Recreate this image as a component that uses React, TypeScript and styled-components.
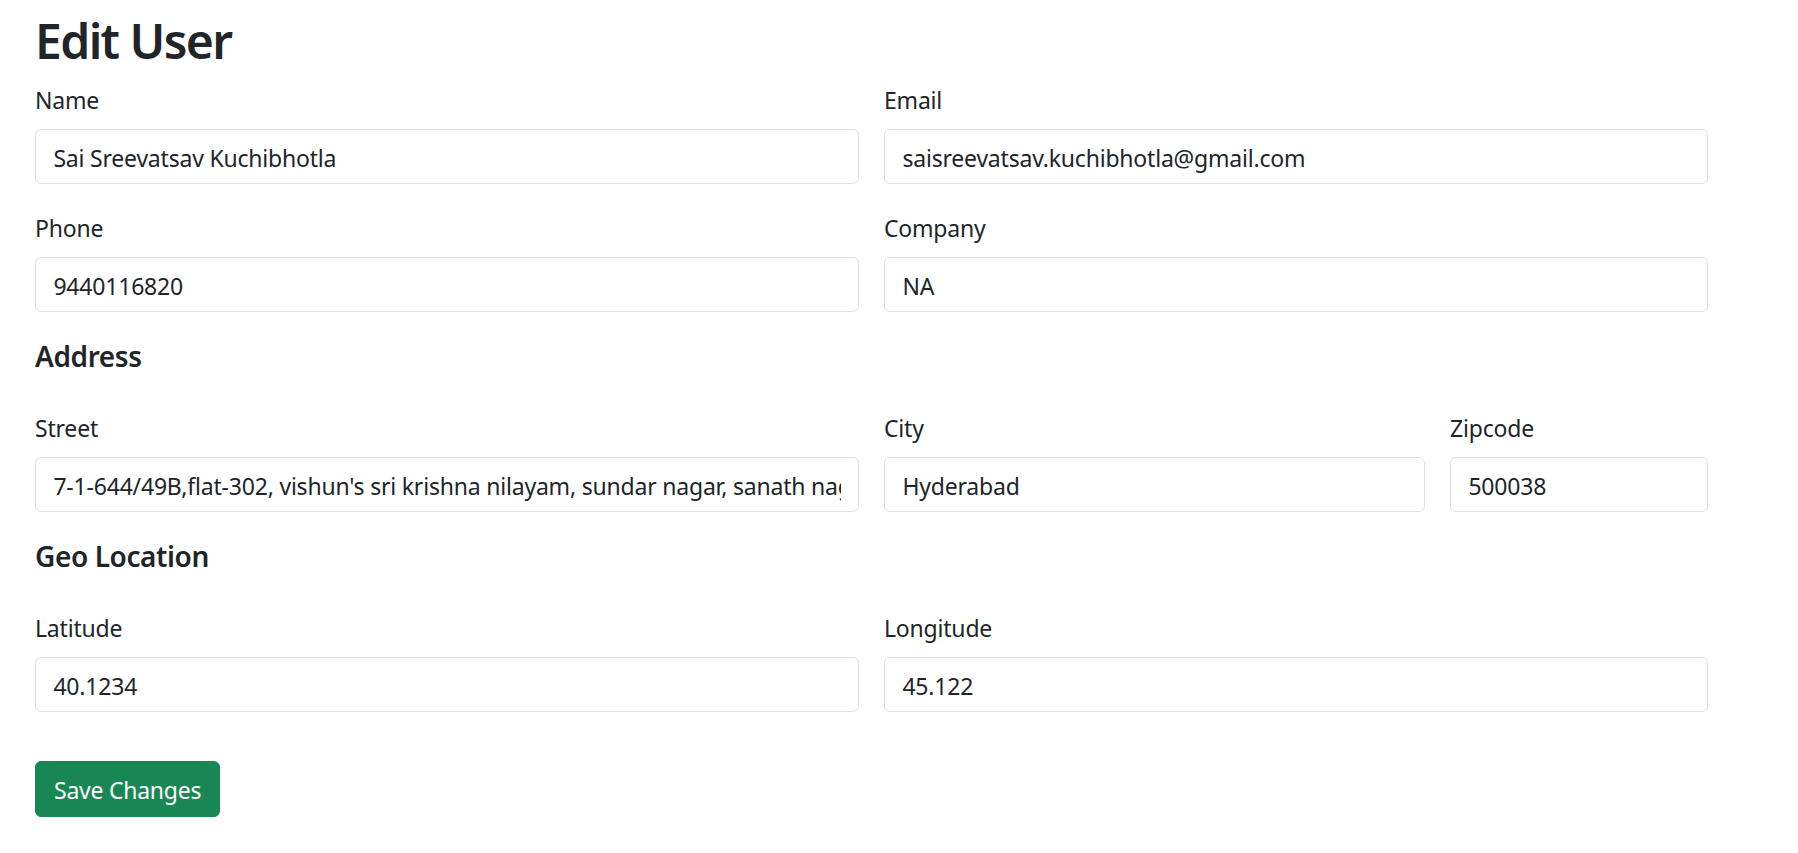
import React from "react";
import styled, { createGlobalStyle } from "styled-components";

const GlobalStyle = createGlobalStyle`
  html, body {
    margin: 0;
    padding: 0;
    background: #ffffff;
  }
  body {
    font-family: "Segoe UI", "Noto Sans", "Open Sans", Arial, sans-serif;
    color: #212529;
  }
  * { box-sizing: border-box; }
`;

const Page = styled.main`
  padding: 10px 0 20px 35px;
  width: 1708px;
`;

const Title = styled.h1`
  margin: 0 0 11.6px 0;
  font-size: 48px;
  line-height: 61px;
  font-weight: 600;
  letter-spacing: -1.6px;
`;

const SectionTitle = styled.h5`
  margin: 0 0 37px 0;
  font-size: 28px;
  line-height: 35px;
  font-weight: 600;
  letter-spacing: -0.4px;
`;

const Row = styled.div<{ $cols: string }>`
  display: grid;
  grid-template-columns: ${(p) => p.$cols};
  column-gap: 25px;
`;

const Field = styled.div`
  display: flex;
  flex-direction: column;
  margin-bottom: 27px;
  min-width: 0;
`;

const Label = styled.label`
  font-size: 23px;
  line-height: 34.5px;
  margin-bottom: 11.7px;
  letter-spacing: -0.2px;
`;

const Input = styled.input`
  display: block;
  width: 100%;
  height: 55px;
  padding: 3px 17.4px 0 17.4px;
  font-family: inherit;
  font-size: 23px;
  line-height: 34.5px;
  letter-spacing: -0.2px;
  color: #212529;
  background: #ffffff;
  border: 1px solid #dee2e6;
  border-radius: 6px;
  outline: none;
`;

const Actions = styled.div`
  padding-top: 21.5px;
`;

const SaveButton = styled.button`
  height: 56px;
  padding: 2px 18px 0 18px;
  font-family: inherit;
  font-size: 23px;
  line-height: 34.5px;
  letter-spacing: -0.25px;
  color: #ffffff;
  background: #198754;
  border: 1px solid #198754;
  border-radius: 6px;
  cursor: pointer;
`;

type FieldDef = { label: string; value: string };

const FormField: React.FC<FieldDef> = ({ label, value }) => {
  const id = label.toLowerCase().replace(/\s+/g, "-");
  return (
    <Field>
      <Label htmlFor={id}>{label}</Label>
      <Input id={id} type="text" defaultValue={value} />
    </Field>
  );
};

export default function App() {
  return (
    <>
      <GlobalStyle />
      <Page>
        <Title>Edit User</Title>
        <form onSubmit={(e) => e.preventDefault()}>
          <Row $cols="1fr 1fr">
            <FormField label="Name" value="Sai Sreevatsav Kuchibhotla" />
            <FormField label="Email" value="saisreevatsav.kuchibhotla@gmail.com" />
          </Row>
          <Row $cols="1fr 1fr">
            <FormField label="Phone" value="9440116820" />
            <FormField label="Company" value="NA" />
          </Row>
          <SectionTitle>Address</SectionTitle>
          <Row $cols="824px 541px 1fr">
            <FormField
              label="Street"
              value="7-1-644/49B,flat-302, vishun's sri krishna nilayam, sundar nagar, sanath nagar, hyderabad"
            />
            <FormField label="City" value="Hyderabad" />
            <FormField label="Zipcode" value="500038" />
          </Row>
          <SectionTitle>Geo Location</SectionTitle>
          <Row $cols="1fr 1fr">
            <FormField label="Latitude" value="40.1234" />
            <FormField label="Longitude" value="45.122" />
          </Row>
          <Actions>
            <SaveButton type="submit">Save Changes</SaveButton>
          </Actions>
        </form>
      </Page>
    </>
  );
}
